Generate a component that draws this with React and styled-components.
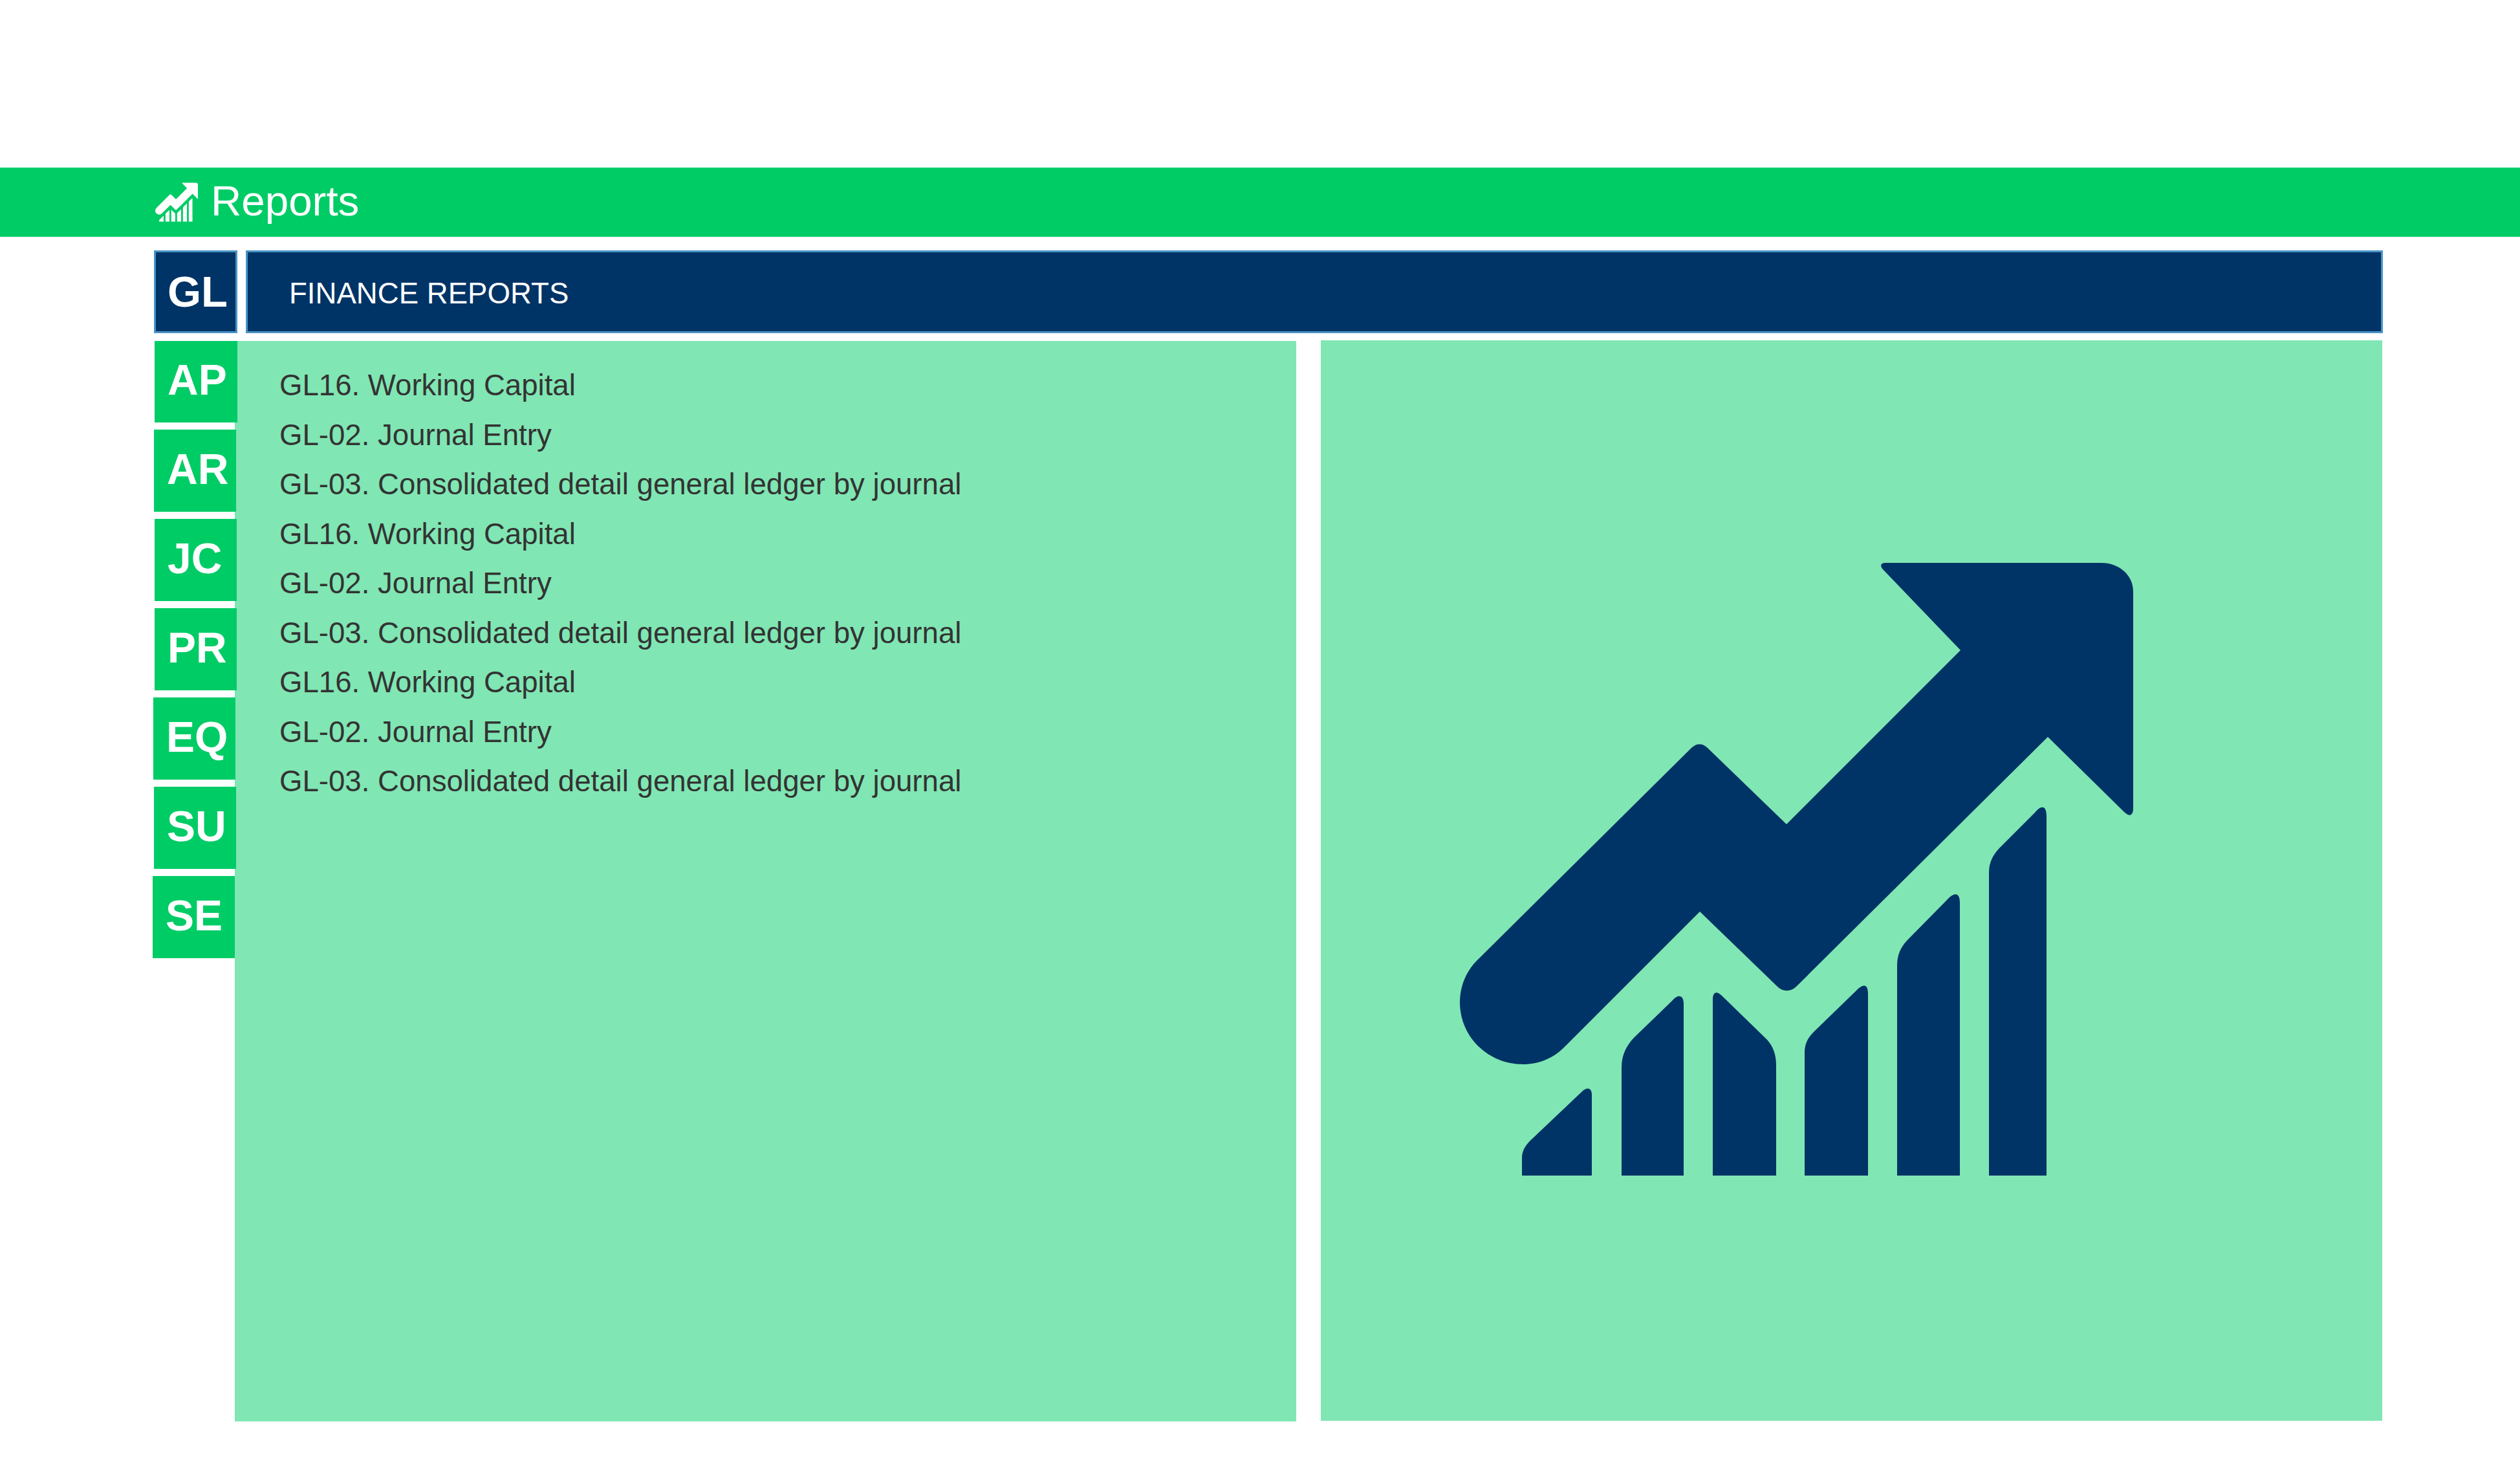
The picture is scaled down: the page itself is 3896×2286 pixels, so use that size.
import React from "react";
import styled, { createGlobalStyle } from "styled-components";

const COLORS = {
  green: "#00cc66",
  mint: "#80e6b3",
  navy: "#003366",
  edge: "#4a94c8",
  text: "#333333",
};

const TABS = [
  { label: "AP", shift: 3, width: 128, height: 126 },
  { label: "AR", shift: 2 },
  { label: "JC", shift: 3 },
  { label: "PR", shift: 3 },
  { label: "EQ", shift: 1 },
  { label: "SU", shift: 2 },
  { label: "SE", shift: 0 },
];

const REPORTS = [
  "GL16. Working Capital",
  "GL-02. Journal Entry",
  "GL-03. Consolidated detail general ledger by journal",
];

const ChartIcon = ({ className }) => (
  <svg className={className} viewBox="57 50 1041 947" fill="currentColor">
    <path d="M715 50 C708 50 706 54 711 60 L831 185 L562 454 L444 340 C432 327 423 327 411 340 L88 660 C68 678 57 703 57 729 C57 782 100 825 154 825 C180 825 203 815 220 797 L428 589 L546 703 C556 714 569 714 579 703 L966 319 L1084 435 C1092 443 1098 441 1098 429 L1098 94 C1098 68 1075 50 1049 50 Z" />
    <path d="M153 997 L153 969 C153 958 160 948 169 940 L246 867 C253 860 261 861 261 872 L261 997 Z" />
    <path d="M307 997 L307 830 C307 810 315 796 326 784 L385 727 C393 717 403 716 403 732 L403 997 Z" />
    <path d="M448 997 L448 725 C448 713 454 711 462 719 L532 787 C541 797 546 810 546 826 L546 997 Z" />
    <path d="M590 997 L590 807 C590 792 596 783 605 774 L669 712 C678 702 688 698 688 716 L688 997 Z" />
    <path d="M733 997 L733 673 C733 655 739 644 748 634 L810 571 C819 561 830 556 830 576 L830 997 Z" />
    <path d="M875 997 L875 530 C875 512 881 502 891 491 L946 436 C954 426 964 422 964 442 L964 997 Z" />
  </svg>
);

const App = () => (
  <Page>
    <GlobalStyle />
    <Header>
      <HeaderIcon />
      <HeaderTitle>Reports</HeaderTitle>
    </Header>
    <TitleRow>
      <ActiveTab>GL</ActiveTab>
      <TitleBar>FINANCE REPORTS</TitleBar>
    </TitleRow>
    <Body>
      <Rail>
        {TABS.map((tab) => (
          <Tab
            key={tab.label}
            $shift={tab.shift}
            $width={tab.width}
            $height={tab.height}
          >
            {tab.label}
          </Tab>
        ))}
      </Rail>
      <ListPanel>
        {[0, 1, 2].map((group) =>
          REPORTS.map((report) => (
            <ReportItem key={`${group}-${report}`}>{report}</ReportItem>
          ))
        )}
      </ListPanel>
      <ChartPanel>
        <BigIcon />
      </ChartPanel>
    </Body>
  </Page>
);

const GlobalStyle = createGlobalStyle`
  html, body {
    margin: 0;
    padding: 0;
    background: #ffffff;
    font-family: "Liberation Sans", Arial, sans-serif;
  }
`;

const Page = styled.div`
  width: 3896px;
  height: 2286px;
  padding-top: 259px;
  box-sizing: border-box;
  overflow: hidden;
`;

const Header = styled.header`
  display: flex;
  align-items: center;
  gap: 20px;
  height: 107px;
  padding-left: 240px;
  background: ${COLORS.green};
  color: #ffffff;
`;

const HeaderIcon = styled(ChartIcon)`
  width: 66px;
  height: 61px;
`;

const HeaderTitle = styled.h1`
  margin: 0 0 4px;
  font-size: 65.5px;
  font-weight: 400;
  line-height: 1;
`;

const TitleRow = styled.div`
  display: flex;
  gap: 13px;
  height: 128px;
  margin: 21px 212px 0 238px;
`;

const ActiveTab = styled.div`
  display: flex;
  align-items: center;
  box-sizing: border-box;
  width: 129px;
  padding: 0 0 2px 18px;
  border: 3px solid ${COLORS.edge};
  background: ${COLORS.navy};
  color: #ffffff;
  font-size: 67px;
  font-weight: 700;
`;

const TitleBar = styled.div`
  display: flex;
  flex: 1;
  align-items: center;
  box-sizing: border-box;
  padding: 5px 0 0 64px;
  border: 3px solid ${COLORS.edge};
  background: ${COLORS.navy};
  color: #ffffff;
  font-size: 45.6px;
`;

const Body = styled.div`
  display: flex;
  margin: 12px 0 0 236px;
`;

const Rail = styled.nav`
  display: flex;
  flex-direction: column;
  gap: 11px;
  flex: none;
  width: 127px;
  position: relative;
  z-index: 1;
`;

const Tab = styled.a`
  display: flex;
  align-items: center;
  flex: none;
  box-sizing: border-box;
  width: ${(p) => p.$width || 127}px;
  height: ${(p) => p.$height || 127}px;
  margin-left: ${(p) => p.$shift}px;
  padding: 0 0 6px 20px;
  background: ${COLORS.green};
  color: #ffffff;
  font-size: 66px;
  font-weight: 700;
`;

const ListPanel = styled.section`
  display: flex;
  flex-direction: column;
  box-sizing: border-box;
  width: 1641px;
  height: 1670px;
  padding: 31px 0 0 69px;
  background: ${COLORS.mint};
`;

const ReportItem = styled.div`
  height: 76.5px;
  color: ${COLORS.text};
  font-size: 45.6px;
  line-height: 76.5px;
`;

const ChartPanel = styled.section`
  box-sizing: border-box;
  width: 1641px;
  height: 1670px;
  margin: -1px 0 0 38px;
  padding: 344px 0 0 215px;
  background: ${COLORS.mint};
  color: ${COLORS.navy};
`;

const BigIcon = styled(ChartIcon)`
  display: block;
  width: 1041px;
  height: 947px;
`;

export default App;
